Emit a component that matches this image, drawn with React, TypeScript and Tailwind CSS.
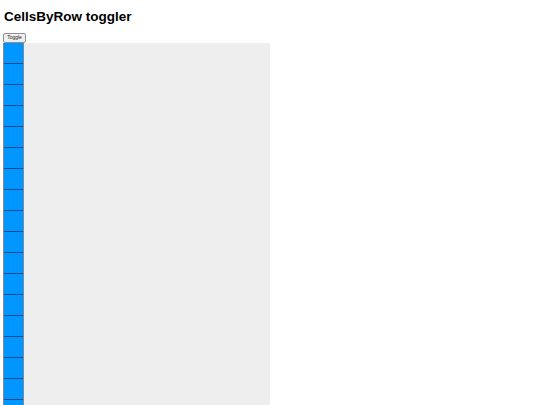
// Toggle demo: a header, a small button and a tall grid of cells laid out by row.
import { useState } from "react";

const CELL_COUNT = 18;

const App = () => {
  // When byRow is true the cells stack in a single column.
  const [byRow, setByRow] = useState(true);

  return (
    <div className="px-[3px] font-['Liberation_Sans',Arial,sans-serif] text-black bg-white min-h-[405px]">
      <h2 className="pt-[9px] text-[13.5px] leading-[15.5px] font-bold pl-px">CellsByRow toggler</h2>

      {/* Toggle button, styled like a native form control */}
      <button
        onClick={() => setByRow(!byRow)}
        className="mt-[8px] h-[10px] w-[23px] flex items-center justify-center rounded-[2px] border border-[#8f8f8f] bg-[#efefef] text-[5px] leading-none text-[#222]"
      >
        Toggle
      </button>

      {/* Grid area */}
      <div className={`w-[267px] h-[380px] bg-[#eeeeee] overflow-hidden flex ${byRow ? "flex-col" : "flex-row flex-wrap"}`}>
        <div className="w-[21px] border-x border-[#7d8a96]">
          {Array.from({ length: CELL_COUNT }).map((_, i) => (
            <div key={i} className="h-[21px] bg-[#0096ff] border-b border-[#0a4a80]" />
          ))}
        </div>
      </div>
    </div>
  );
};

export default App;
